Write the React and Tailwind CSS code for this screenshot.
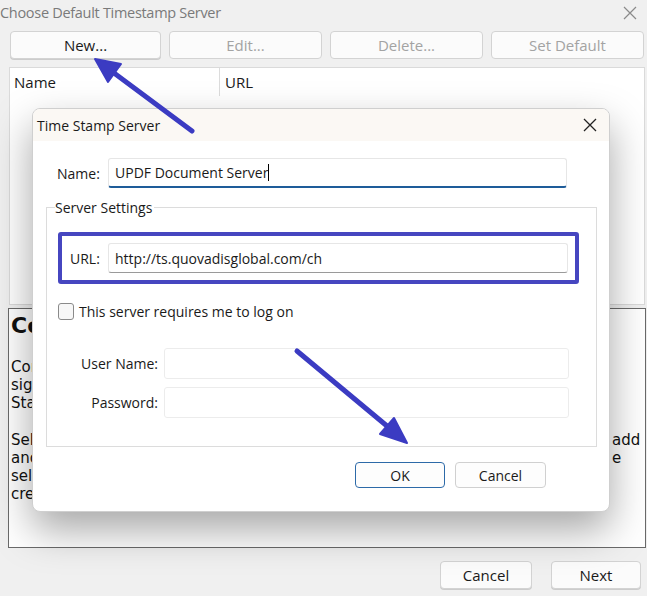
import React from "react";

const ui = { fontFamily: '"Segoe UI", "Open Sans", "Noto Sans", sans-serif' };
const verdana = { fontFamily: '"DejaVu Sans", Verdana, sans-serif' };

function OuterButton({ children, disabled, className = "" }) {
  return (
    <div
      className={`h-[28px] flex items-center justify-center rounded-[4px] border border-[#d3d3d3] bg-[#fbfbfb] text-[15px] ${
        disabled ? "text-[#a3a3a3]" : "text-[#1a1a1a] shadow-[0_1px_0_rgba(0,0,0,0.15)]"
      } ${className}`}>
      {children}
    </div>
  );
}

function Field({ value, className = "" }) {
  return (
    <div
      className={`h-[30px] flex items-center px-[6px] bg-white border border-[#e6e6e6] border-b-[#9a9a9a] rounded-[3px] text-[14px] text-[#1a1a1a] ${className}`}>
      {value}
    </div>
  );
}

function Arrows() {
  return (
    <svg className="absolute inset-0 pointer-events-none" width="647" height="596">
      <g fill="#3b3bc2" stroke="#3b3bc2" strokeLinecap="round" strokeLinejoin="round">
        <line x1="192" y1="131" x2="114" y2="73" strokeWidth="5" />
        <polygon points="95,59 121,64 108,82" strokeWidth="2" />
        <line x1="297" y1="351" x2="387" y2="426" strokeWidth="5" />
        <polygon points="407,443 380,434 394,418" strokeWidth="2" />
      </g>
    </svg>
  );
}

function TimeStampDialog() {
  return (
    <div
      style={ui}
      className="absolute left-[32px] top-[108px] w-[578px] h-[404px] rounded-[8px] bg-white border border-[#cfcfcf] shadow-[0_18px_40px_rgba(0,0,0,0.35)] overflow-hidden">
      {/* title bar */}
      <div className="h-[32px] bg-[#fbf8f4] flex items-center justify-between pl-[4px] pr-[12px]">
        <span className="text-[14px] text-[#1a1a1a]">Time Stamp Server</span>
        <svg width="14" height="14" viewBox="0 0 14 14">
          <path d="M1 1 L13 13 M13 1 L1 13" stroke="#222" strokeWidth="1.3" />
        </svg>
      </div>

      {/* name row */}
      <div className="flex items-center mt-[17px] pl-[24px]">
        <span className="w-[51px] text-[14px] text-[#1a1a1a]">Name:</span>
        <div className="w-[459px] h-[30px] flex items-center px-[6px] bg-white border border-[#e6e6e6] border-b-2 border-b-[#1e5c99] rounded-[3px] text-[14px] text-[#1a1a1a]">
          UPDF Document Server<span className="inline-block w-px h-[17px] bg-black" />
        </div>
      </div>

      {/* server settings group */}
      <div className="relative ml-[13px] mt-[19px] w-[551px] h-[240px] border border-[#dcdcdc]">
        <span className="absolute left-[8px] -top-[11px] bg-white pr-[2px] text-[14px] text-[#1a1a1a]">
          Server Settings
        </span>

        <div className="ml-[11px] mt-[24px] w-[521px] h-[52px] border-[4px] border-[#4646c0] rounded-[3px] flex items-center">
          <span className="w-[46px] pl-[8px] text-[14px] text-[#1a1a1a]">URL:</span>
          <Field value="http://ts.quovadisglobal.com/ch" className="w-[460px]" />
        </div>

        <div className="flex items-center ml-[11px] mt-[17px]">
          <div className="w-[16px] h-[17px] rounded-[3px] border border-[#8a8a8a] bg-[#f7f7f7]" />
          <span className="ml-[5px] text-[14px] text-[#1a1a1a]">This server requires me to log on</span>
        </div>

        <div className="flex items-center mt-[26px]">
          <span className="w-[111px] text-right text-[14px] text-[#1a1a1a]">User Name:</span>
          <div className="ml-[6px] w-[405px] h-[31px] border border-[#ececec] rounded-[3px] bg-white" />
        </div>
        <div className="flex items-center mt-[8px]">
          <span className="w-[111px] text-right text-[14px] text-[#1a1a1a]">Password:</span>
          <div className="ml-[6px] w-[405px] h-[31px] border border-[#ececec] rounded-[3px] bg-white" />
        </div>
      </div>

      {/* buttons */}
      <div className="flex justify-end gap-[10px] mt-[15px] pr-[63px]">
        <div className="w-[90px] h-[26px] flex items-center justify-center rounded-[4px] border border-[#2d6aa8] bg-[#fdfdfd] text-[14px] text-[#1a1a1a]">
          OK
        </div>
        <div className="w-[91px] h-[26px] flex items-center justify-center rounded-[4px] border border-[#d0d0d0] bg-[#fdfdfd] text-[14px] text-[#1a1a1a]">
          Cancel
        </div>
      </div>
    </div>
  );
}

function Line({ left, right }) {
  return (
    <div className="flex justify-between h-[18px] leading-[18px]">
      <span>{left}</span>
      <span className="w-[21px] text-left">{right}</span>
    </div>
  );
}

export default function App() {
  return (
    <div style={ui} className="relative w-[647px] h-[596px] bg-[#f0f0f0] overflow-hidden">
      {/* window title */}
      <div className="h-[26px] flex items-center justify-between pr-[10px]">
        <span className="text-[14.5px] text-[#7a7a7a] tracking-[-0.3px]">Choose Default Timestamp Server</span>
        <svg width="14" height="14" viewBox="0 0 14 14">
          <path d="M1 1 L13 13 M13 1 L1 13" stroke="#8a8a8a" strokeWidth="1.2" />
        </svg>
      </div>

      {/* toolbar */}
      <div className="flex gap-[8px] mt-[5px] pl-[10px] pr-[2px]">
        <OuterButton className="w-[151px]">New...</OuterButton>
        <OuterButton disabled className="w-[153px]">Edit...</OuterButton>
        <OuterButton disabled className="w-[153px]">Delete...</OuterButton>
        <OuterButton disabled className="w-[153px]">Set Default</OuterButton>
      </div>

      {/* list */}
      <div className="ml-[9px] mt-[8px] w-[636px] h-[238px] bg-white border border-[#dadada]">
        <div className="flex h-[28px] items-center text-[15px] text-[#1a1a1a]">
          <div className="w-[210px] pl-[4px] h-full flex items-center border-r border-[#dcdcdc]">Name</div>
          <div className="pl-[5px]">URL</div>
        </div>
      </div>

      {/* description panel */}
      <div
        style={verdana}
        className="ml-[8px] mt-[3px] w-[638px] h-[240px] bg-white border border-[#6a6a6a] pl-[2px] pr-[12px] text-[15px] text-[#111]">
        <div className="text-[22px] font-bold leading-[30px] mt-[2px]">Configure Timestamp Server</div>
        <div className="mt-[17px]">
          <Line left="Configure the timestamp server used when" right="" />
          <Line left="signing documents with a digital ID." right="" />
          <Line left="Stamps are added to each signature." right="" />
        </div>
        <div className="mt-[19px]">
          <Line left="Select a server from the list, or click New to" right="add" />
          <Line left="and set a new one as default. The" right="e" />
          <Line left="selected server will be used for newly" right="" />
          <Line left="created signatures." right="" />
        </div>
      </div>

      {/* footer */}
      <div className="flex justify-end gap-[19px] mt-[13px] pr-[6px]">
        <OuterButton className="w-[92px] h-[27px]">Cancel</OuterButton>
        <OuterButton className="w-[90px] h-[27px]">Next</OuterButton>
      </div>

      <TimeStampDialog />
      <Arrows />
    </div>
  );
}
